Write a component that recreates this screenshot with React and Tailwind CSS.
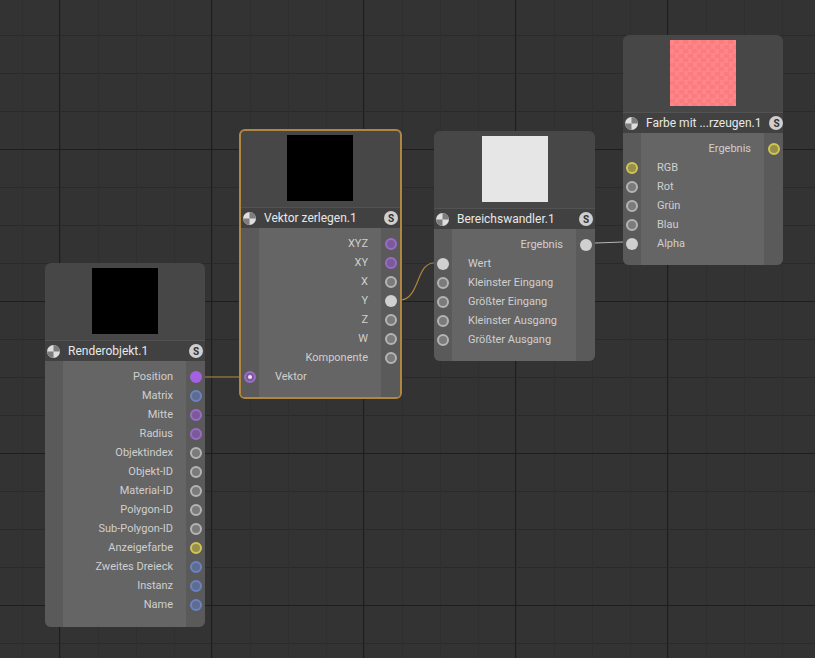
import React from "react";

const GREY = { ring: "border-[#b4b4b4]", fill: "bg-[#7b7b7b]" };
const PURPLE = { ring: "border-[#9a6cc8]", fill: "bg-[#7a5a98]" };
const BLUE = { ring: "border-[#6c82c4]", fill: "bg-[#5e6c90]" };
const YELLOW = { ring: "border-[#d2c64f]", fill: "bg-[#96904e]" };

const nodes = [
  {
    pos: "left-[45px] top-[263px] w-[160px]",
    title: "Renderobjekt.1",
    preview: "bg-black",
    pb: "pb-[13px]",
    rows: [
      { label: "Position", out: true, solid: "bg-[#a561e3]" },
      { label: "Matrix", out: true, color: BLUE },
      { label: "Mitte", out: true, color: PURPLE },
      { label: "Radius", out: true, color: PURPLE },
      { label: "Objektindex", out: true, color: GREY },
      { label: "Objekt-ID", out: true, color: GREY },
      { label: "Material-ID", out: true, color: GREY },
      { label: "Polygon-ID", out: true, color: GREY },
      { label: "Sub-Polygon-ID", out: true, color: GREY },
      { label: "Anzeigefarbe", out: true, color: YELLOW },
      { label: "Zweites Dreieck", out: true, color: BLUE },
      { label: "Instanz", out: true, color: BLUE },
      { label: "Name", out: true, color: BLUE },
    ],
  },
  {
    pos: "left-[239px] top-[129px] w-[163px]",
    title: "Vektor zerlegen.1",
    preview: "bg-black",
    selected: true,
    pb: "pb-[11px]",
    rows: [
      { label: "XYZ", out: true, color: PURPLE },
      { label: "XY", out: true, color: PURPLE },
      { label: "X", out: true, color: GREY },
      { label: "Y", out: true, solid: "bg-[#d0d0d0]" },
      { label: "Z", out: true, color: GREY },
      { label: "W", out: true, color: GREY },
      { label: "Komponente", out: true, color: GREY },
      { label: "Vektor", color: PURPLE, dot: true },
    ],
  },
  {
    pos: "left-[434px] top-[131px] w-[161px]",
    title: "Bereichswandler.1",
    preview: "bg-[#e6e6e6]",
    pb: "pb-[12px]",
    rows: [
      { label: "Ergebnis", out: true, solid: "bg-[#d0d0d0]" },
      { label: "Wert", solid: "bg-[#d0d0d0]" },
      { label: "Kleinster Eingang", color: GREY },
      { label: "Größter Eingang", color: GREY },
      { label: "Kleinster Ausgang", color: GREY },
      { label: "Größter Ausgang", color: GREY },
    ],
  },
  {
    pos: "left-[623px] top-[35px] w-[160px]",
    title: "Farbe mit ...rzeugen.1",
    preview: "bg-[repeating-conic-gradient(#fb7c7e_0_25%,#ff8688_0_50%)] bg-[size:9px_9px]",
    pb: "pb-[12px]",
    rows: [
      { label: "Ergebnis", out: true, color: YELLOW },
      { label: "RGB", color: YELLOW },
      { label: "Rot", color: GREY },
      { label: "Grün", color: GREY },
      { label: "Blau", color: GREY },
      { label: "Alpha", solid: "bg-[#d0d0d0]" },
    ],
  },
];

function Port({ row }) {
  if (row.solid) {
    return <span className={`block size-[12px] rounded-full ${row.solid}`} />;
  }
  return (
    <span className={`flex size-[12px] items-center justify-center rounded-full border-2 ${row.color.ring} ${row.color.fill}`}>
      {row.dot && <span className="size-[4px] rounded-full bg-[#efe0fa]" />}
    </span>
  );
}

function CheckerIcon() {
  return (
    <svg width="13" height="13" viewBox="0 0 13 13" className="shrink-0">
      <circle cx="6.5" cy="6.5" r="6.5" fill="#dedede" />
      <path d="M6.5 6.5V0A6.5 6.5 0 0 1 13 6.5Z" fill="#7d7d7d" />
      <path d="M6.5 6.5V13A6.5 6.5 0 0 1 0 6.5Z" fill="#7d7d7d" />
    </svg>
  );
}

function Node({ node }) {
  return (
    <div
      className={`absolute ${node.pos} overflow-hidden rounded-[6px] bg-[#474747] ${
        node.selected ? "border-2 border-[#b08640]" : ""
      }`}
    >
      <div className={`flex items-start justify-center ${node.selected ? "h-[76px] pt-[4px] pr-[2px]" : "h-[77px] pt-[5px]"}`}>
        <div className={`size-[66px] ${node.preview}`} />
      </div>
      <div className="flex h-[21px] items-center gap-[8px] border-t border-[#525252] bg-[#414141] pl-[2px] pr-[2px] text-[12px] text-[#e8e8e8]">
        <CheckerIcon />
        <span className="flex-1 whitespace-nowrap">{node.title}</span>
        <span className="flex size-[14px] shrink-0 items-center justify-center rounded-full bg-[#cfcfcf] text-[10px] font-bold text-[#333333]">
          S
        </span>
      </div>
      <div className="flex text-[11px] text-[#cfcfcf]">
        <div className={`w-[18px] bg-[#5a5a5a] pt-[6px] ${node.pb}`}>
          {node.rows.map((r) => (
            <div key={r.label} className="flex h-[19px] items-center justify-center">
              {!r.out && <Port row={r} />}
            </div>
          ))}
        </div>
        <div className={`flex-1 bg-[#656565] pt-[6px] ${node.pb}`}>
          {node.rows.map((r) => (
            <div
              key={r.label}
              className={`flex h-[19px] items-center pt-[2px] ${r.out ? "justify-end pr-[13px]" : "pl-[16px]"}`}
            >
              {r.label}
            </div>
          ))}
        </div>
        <div className={`w-[19px] bg-[#5a5a5a] pt-[6px] ${node.pb}`}>
          {node.rows.map((r) => (
            <div key={r.label} className="flex h-[19px] items-center justify-center">
              {r.out && <Port row={r} />}
            </div>
          ))}
        </div>
      </div>
    </div>
  );
}

export default function App() {
  return (
    <div
      className="relative h-[658px] w-[815px] overflow-hidden bg-[#333333] font-['Roboto',sans-serif] bg-[image:linear-gradient(90deg,#1e1e1e_1px,transparent_1px),linear-gradient(0deg,#1e1e1e_1px,transparent_1px),linear-gradient(90deg,#2f2f2f_1px,transparent_1px),linear-gradient(0deg,#2a2a2a_1px,transparent_1px)] bg-[size:152px_152px,152px_152px,38px_38px,38px_38px] bg-[position:59px_0,0_150px,22px_0,0_36px]"
    >
      <svg className="absolute inset-0" width="815" height="658" fill="none">
        <path d="M205 377H240" stroke="#b98f48" strokeWidth="1.2" />
        <path d="M401 300C420 298 416 263 434 263" stroke="#b0853c" strokeWidth="1.2" />
        <path d="M595 243L623 242" stroke="#b5b5b5" strokeWidth="1.2" />
      </svg>
      {nodes.map((n) => (
        <Node key={n.title} node={n} />
      ))}
    </div>
  );
}
